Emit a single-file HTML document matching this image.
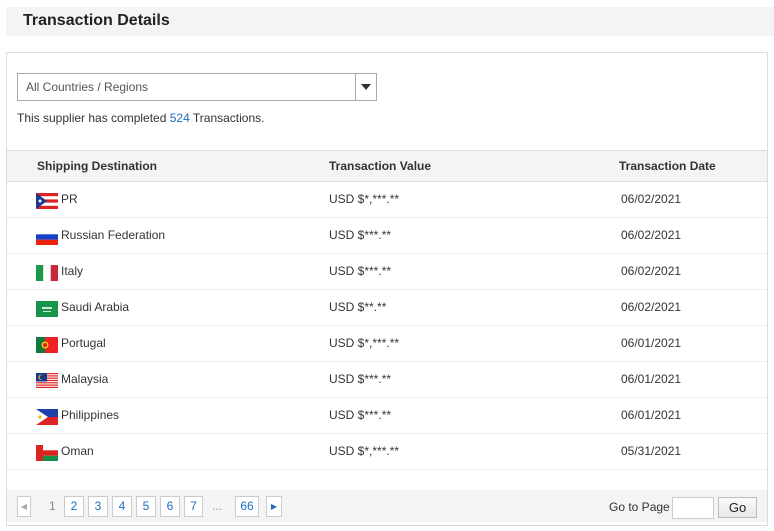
<!DOCTYPE html>
<html><head><meta charset="utf-8"><style>
*{box-sizing:border-box;margin:0;padding:0}
body{width:774px;height:531px;background:#fff;font-family:"Liberation Sans",Arial,sans-serif;color:#333;position:relative;overflow:hidden}
.hd{position:absolute;left:6px;top:7px;width:768px;height:29px;background:#f4f4f4}
.hd h2{position:absolute;left:17px;top:5px;font-size:16px;font-weight:bold;color:#222}
.panel{position:absolute;left:6px;top:52px;width:762px;height:474px;border:1px solid #ddd}
.sel{position:absolute;left:10px;top:20px;width:360px;height:28px;border:1px solid #aaa;font-size:12px;color:#555}
.sel span{position:absolute;left:8px;top:6px}
.sel .ar{position:absolute;right:0;top:0;width:21px;height:26px;border-left:1px solid #aaa}
.sel .ar:after{content:"";position:absolute;left:5px;top:10px;border-left:5px solid transparent;border-right:5px solid transparent;border-top:6px solid #333}
.info{position:absolute;left:10px;top:58px;font-size:12px;color:#333}
.info b{font-weight:normal;color:#1a6ec1}
.th{position:absolute;left:0;top:97px;width:760px;height:32px;background:#f4f4f4;border-top:1px solid #ddd;border-bottom:1px solid #ddd;font-size:12px;font-weight:bold;color:#333}
.th div,.row div{position:absolute;top:8px}
.row{position:absolute;left:0;width:760px;height:36px;border-bottom:1px solid #eee;font-size:12px;color:#333}
.row div{top:10px}
.c1{left:30px}.c2{left:322px}.c3{left:612px}
.row .c1{left:54px}.row .c3{left:614px}
.flag{position:absolute;left:29px;top:11px;width:22px;height:16px}
.ft{position:absolute;left:0;top:437px;width:760px;height:32px;background:#f4f4f4}
.pb{position:absolute;top:6px;height:21px;border:1px solid #ccc;background:#fff;font-size:12px;color:#1a6ec1;text-align:center;line-height:19px}
.dis{position:absolute;top:9px;font-size:12px;color:#888}
.gp{position:absolute;left:602px;top:10px;font-size:12px;color:#333}
.inp{position:absolute;left:665px;top:7px;width:42px;height:22px;border:1px solid #ccc;background:#fff}
.go{position:absolute;left:711px;top:7px;width:39px;height:21px;border:1px solid #bbb;background:linear-gradient(#fafafa,#e8e8e8);font-size:13px;text-align:center;line-height:19px;color:#222}
</style></head><body>
<div class="hd"><h2>Transaction Details</h2></div>
<div class="panel">
<div class="sel"><span>All Countries / Regions</span><div class="ar"></div></div>
<div class="info">This supplier has completed <b>524</b> Transactions.</div>
<div class="th"><div class="c1">Shipping Destination</div><div class="c2">Transaction Value</div><div class="c3">Transaction Date</div></div>

<div class="row" style="top:129px"><svg class="flag" viewBox="0 0 22 16"><rect width="22" height="16" fill="#fff"/><rect y="0" width="22" height="3.2" fill="#d22"/><rect y="6.4" width="22" height="3.2" fill="#d22"/><rect y="12.8" width="22" height="3.2" fill="#d22"/><polygon points="0,0 11,8 0,16" fill="#1a3a8c"/><circle cx="4" cy="8" r="1.5" fill="#fff"/></svg><div class="c1">PR</div><div class="c2">USD $*,***.**</div><div class="c3">06/02/2021</div></div>
<div class="row" style="top:165px"><svg class="flag" viewBox="0 0 22 16"><rect width="22" height="5.3" fill="#fff"/><rect y="5.3" width="22" height="5.4" fill="#1540c8"/><rect y="10.7" width="22" height="5.3" fill="#e21"/></svg><div class="c1">Russian Federation</div><div class="c2">USD $***.**</div><div class="c3">06/02/2021</div></div>
<div class="row" style="top:201px"><svg class="flag" viewBox="0 0 22 16"><rect width="7.3" height="16" fill="#1a9a48"/><rect x="7.3" width="7.4" height="16" fill="#fff"/><rect x="14.7" width="7.3" height="16" fill="#c8283a"/></svg><div class="c1">Italy</div><div class="c2">USD $***.**</div><div class="c3">06/02/2021</div></div>
<div class="row" style="top:237px"><svg class="flag" viewBox="0 0 22 16"><rect width="22" height="16" fill="#16944a"/><rect x="6" y="6" width="10" height="2" fill="#cfe8d5"/><rect x="7" y="10" width="8" height="1" fill="#cfe8d5"/></svg><div class="c1">Saudi Arabia</div><div class="c2">USD $**.**</div><div class="c3">06/02/2021</div></div>
<div class="row" style="top:273px"><svg class="flag" viewBox="0 0 22 16"><rect width="22" height="16" fill="#e22"/><rect width="9" height="16" fill="#117a3a"/><circle cx="9" cy="8" r="3.5" fill="#f5c518"/><circle cx="9" cy="8" r="2" fill="#d22"/></svg><div class="c1">Portugal</div><div class="c2">USD $*,***.**</div><div class="c3">06/01/2021</div></div>
<div class="row" style="top:309px"><svg class="flag" viewBox="0 0 22 16"><rect width="22" height="16" fill="#fff"/><g fill="#d22"><rect y="0" width="22" height="1.2"/><rect y="2.3" width="22" height="1.2"/><rect y="4.6" width="22" height="1.2"/><rect y="6.9" width="22" height="1.2"/><rect y="9.2" width="22" height="1.2"/><rect y="11.5" width="22" height="1.2"/><rect y="13.8" width="22" height="1.2"/></g><rect width="11" height="8.5" fill="#1a3a8c"/><circle cx="5" cy="4.2" r="2.6" fill="#f5c518"/><circle cx="5.8" cy="4.2" r="2.2" fill="#1a3a8c"/></svg><div class="c1">Malaysia</div><div class="c2">USD $***.**</div><div class="c3">06/01/2021</div></div>
<div class="row" style="top:345px"><svg class="flag" viewBox="0 0 22 16"><rect width="22" height="8" fill="#1f3fa8"/><rect y="8" width="22" height="8" fill="#d22"/><polygon points="0,0 12,8 0,16" fill="#fff"/><circle cx="4" cy="8" r="1.8" fill="#f5c518"/></svg><div class="c1">Philippines</div><div class="c2">USD $***.**</div><div class="c3">06/01/2021</div></div>
<div class="row" style="top:381px"><svg class="flag" viewBox="0 0 22 16"><rect width="22" height="16" fill="#fff"/><rect y="10.7" width="22" height="5.3" fill="#149048"/><rect width="7" height="16" fill="#d22"/><rect x="7" y="5.3" width="15" height="5.4" fill="#d22"/></svg><div class="c1">Oman</div><div class="c2">USD $*,***.**</div><div class="c3">05/31/2021</div></div>

<div class="ft">
<div class="pb" style="left:10px;width:14px;color:#aaa;font-size:8px">&#9664;</div>
<div class="dis" style="left:42px">1</div>
<div class="pb" style="left:57px;width:20px">2</div>
<div class="pb" style="left:81px;width:20px">3</div>
<div class="pb" style="left:105px;width:20px">4</div>
<div class="pb" style="left:129px;width:20px">5</div>
<div class="pb" style="left:153px;width:20px">6</div>
<div class="pb" style="left:177px;width:19px">7</div>
<div class="dis" style="left:205px;color:#999">...</div>
<div class="pb" style="left:228px;width:24px">66</div>
<div class="pb" style="left:259px;width:16px;font-size:8px">&#9654;</div>
<div class="gp">Go to Page</div>
<div class="inp"></div>
<div class="go">Go</div>
</div>
</div>
</body></html>
